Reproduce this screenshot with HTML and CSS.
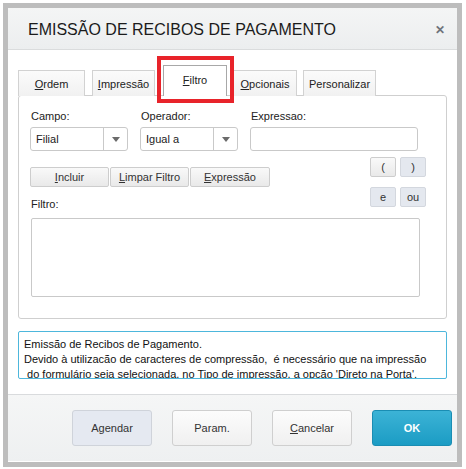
FILE: index.html
```html
<!DOCTYPE html>
<html>
<head lang="pt">
    <meta charset="UTF-8">
    <title>Emissão de Recibos de Pagamento</title>
    <link rel="stylesheet" href="styles.css">
</head>
<body>

<div class="frame">
    <div class="dialog">
        <div class="titlebar">
            <span class="title">EMISSÃO DE RECIBOS DE PAGAMENTO</span>
            <span class="close">&#x2715;</span>
        </div>

        <div class="content">
            <!-- abas -->
            <div class="tabs">
                <div class="tab t-ordem"><u>O</u>rdem</div>
                <div class="tab t-impr"><u>I</u>mpressão</div>
                <div class="tab t-filtro current"><u>F</u>iltro<span class="mark"></span></div>
                <div class="tab t-opc"><u>O</u>pcionais</div>
                <div class="tab t-pers">Personalizar</div>
            </div>

            <div class="panel">
                <div class="fields">
                    <div class="field f-campo">
                        <label>Campo:</label>
                        <div class="select"><span class="val">Filial</span><span class="arrow"></span></div>
                    </div>
                    <div class="field f-oper">
                        <label>Operador:</label>
                        <div class="select"><span class="val">Igual a</span><span class="arrow"></span></div>
                    </div>
                    <div class="field f-expr">
                        <label>Expressao:</label>
                        <div class="input"></div>
                    </div>
                </div>

                <div class="middle">
                    <div class="left">
                        <div class="btnrow">
                            <div class="btn"><u>I</u>ncluir</div>
                            <div class="btn"><u>L</u>impar Filtro</div>
                            <div class="btn"><u>E</u>xpressão</div>
                        </div>
                        <label class="lbl-filtro">Filtro:</label>
                    </div>
                    <div class="ops">
                        <div class="op plain">(</div>
                        <div class="op">)</div>
                        <div class="op">e</div>
                        <div class="op">ou</div>
                    </div>
                </div>

                <div class="textarea"></div>
            </div>

            <div class="message">
                Emissão de Recibos de Pagamento.<br>
                Devido à utilizacão de caracteres de compressão,&nbsp; é necessário que na impressão<br>
                &nbsp;do formulário seja selecionada, no Tipo de impressão, a opcão 'Direto na Porta'.
            </div>
        </div>

        <div class="footer">
            <div class="fbtn agendar">Agendar</div>
            <div class="fbtn">Param.</div>
            <div class="fbtn"><u>C</u>ancelar</div>
            <div class="fbtn ok">OK</div>
        </div>
    </div>
</div>

</body>
</html>
```

FILE: styles.css
```css
* {
    padding: 0;
    margin: 0;
    box-sizing: border-box;
}
body {
    background-color: #fff;
    font-family: "Liberation Sans", Arial, sans-serif;
    font-size: 11px;
    color: #222;
}
u {
    text-decoration: underline;
}
.frame {
    width: 459px;
    margin: 3px 0 0 3px;
    border: 5px solid #bdbdbd;
}
.dialog {
    height: 454px;
    background-color: #fff;
    border-bottom: 1px solid #fff;
    display: flex;
    flex-direction: column;
}
.titlebar {
    height: 42px;
    padding: 0 12px 0 20px;
    display: flex;
    align-items: center;
    justify-content: space-between;
    background: linear-gradient(#f4f5f5, #eceeef);
    border-bottom: 1px solid #dadcdd;
}
.title {
    font-size: 16px;
    color: #1b1b1b;
    padding-top: 2px;
}
.close {
    font-size: 12px;
    font-weight: bold;
    color: #6e737a;
    padding-top: 2px;
}
.content {
    padding: 0 10px;
    flex: 1;
}
/* abas */
.tabs {
    height: 46px;
    display: flex;
    align-items: flex-end;
    margin-bottom: -1px;
    position: relative;
}
.tab {
    height: 26px;
    border: 1px solid #d2d2d2;
    border-bottom: none;
    background: linear-gradient(#fbfbfb, #f1f1f1);
    text-align: center;
    line-height: 25px;
    padding-top: 1px;
    color: #222;
}
.t-ordem { width: 67px; margin-right: 7px; }
.t-impr { width: 63px; margin-right: 8px; }
.t-filtro { width: 64px; margin-right: 6px; }
.t-opc { width: 64px; margin-right: 6px; }
.t-pers { width: 73px; }
.tab.current {
    height: 31px;
    background: #fff;
    border: 1px solid #a8a8a8;
    border-bottom: none;
    line-height: 28px;
    padding-top: 0;
    position: relative;
    z-index: 2;
}
.mark {
    position: absolute;
    left: -7px;
    top: -10px;
    width: 77px;
    height: 47px;
    border: 4px solid #e8232a;
}
.panel {
    height: 224px;
    border: 1px solid #cfcfcf;
    border-radius: 3px;
    padding: 13px 20px 0 11px;
    background: #fff;
}
.fields {
    display: flex;
    gap: 12px;
}
.field label {
    display: block;
    height: 14px;
    line-height: 14px;
    padding-left: 1px;
    margin-bottom: 4px;
}
.select,
.input {
    height: 24px;
    border: 1px solid #c9c9c9;
    border-radius: 3px;
    background: #fff;
}
.select {
    width: 98px;
    display: flex;
}
.f-expr .input {
    width: 168px;
}
.select .val {
    flex: 1;
    line-height: 22px;
    padding-left: 5px;
    border-right: 1px solid #c9c9c9;
}
.select .arrow {
    width: 23px;
    display: flex;
    align-items: center;
    justify-content: center;
}
.select .arrow::after {
    content: "";
    border-left: 4px solid transparent;
    border-right: 4px solid transparent;
    border-top: 5px solid #6b6b6b;
}
.middle {
    display: flex;
    justify-content: space-between;
    margin-top: 6px;
}
.btnrow {
    display: flex;
    gap: 1px;
    margin-top: 10px;
}
.btn {
    width: 79px;
    height: 20px;
    line-height: 18px;
    text-align: center;
    border: 1px solid #cdcdcd;
    border-radius: 2px;
    background: linear-gradient(#f9f9f9, #e9e9e9);
    color: #333;
}
.btnrow .btn:last-child {
    width: 80px;
}
.lbl-filtro {
    display: block;
    height: 14px;
    line-height: 14px;
    margin-top: 10px;
    padding-left: 1px;
}
.ops {
    display: grid;
    grid-template-columns: 26px 26px;
    column-gap: 4px;
    row-gap: 10px;
    align-content: start;
}
.op {
    height: 20px;
    line-height: 18px;
    text-align: center;
    border: 1px solid #d3d7de;
    border-radius: 2px;
    background: #e4e8ef;
    color: #333;
}
.op.plain {
    background: linear-gradient(#f9f9f9, #e9e9e9);
    border-color: #cdcdcd;
}
.textarea {
    width: 389px;
    height: 79px;
    margin-top: 7px;
    border: 1px solid #c9c9c9;
    border-radius: 2px;
    margin-left: 1px;
}
.message {
    height: 48px;
    margin-top: 12px;
    border: 1px solid #4db7dc;
    border-radius: 2px;
    padding: 5px 5px 0;
    line-height: 15px;
    overflow: hidden;
    color: #111;
    white-space: nowrap;
}
.footer {
    height: 67px;
    border-top: 1px solid #d9dbdd;
    background: linear-gradient(#f5f6f6, #eef0f1);
    display: flex;
    justify-content: flex-end;
    gap: 20px;
    padding: 15px 5px 0 0;
}
.fbtn {
    width: 80px;
    height: 36px;
    line-height: 34px;
    text-align: center;
    border: 1px solid #cfcfcf;
    border-radius: 3px;
    background: linear-gradient(#fcfcfc, #f0f0f0);
    color: #333;
}
.fbtn.agendar {
    background: #e5e9f1;
    border-color: #cfd3da;
}
.fbtn.ok {
    background: linear-gradient(#3cb3d6, #1b9cc4);
    border-color: #1a8db3;
    color: #fff;
    font-weight: bold;
}
```
